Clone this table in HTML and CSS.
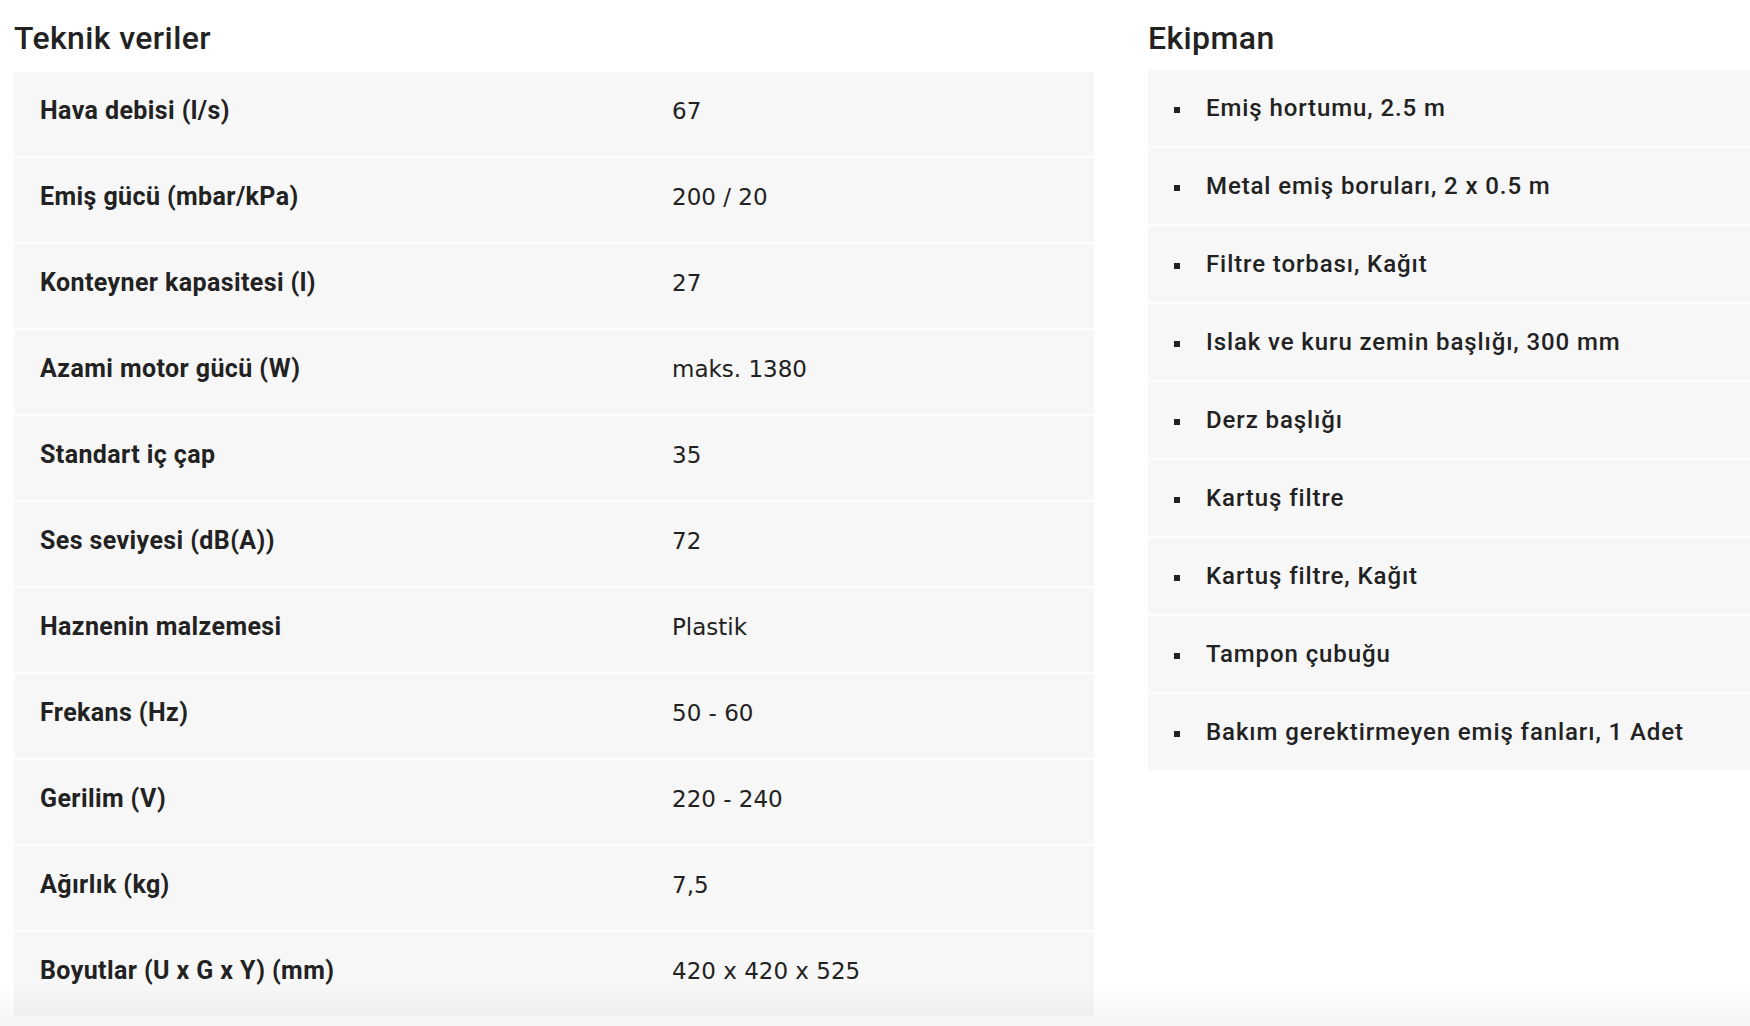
FILE: index.html
```html
<!DOCTYPE html>
<html lang="tr">
<head>
<meta charset="utf-8">
<title>Teknik veriler</title>
<link rel="stylesheet" href="styles.css">
</head>
<body>
<div class="page">
  <section class="col-left">
    <h2 class="heading">Teknik veriler</h2>
    <div class="spec-list">
      <div class="spec-row"><div class="spec-label">Hava debisi (l/s)</div><div class="spec-value">67</div></div>
      <div class="spec-row"><div class="spec-label">Emiş gücü (mbar/kPa)</div><div class="spec-value">200 / 20</div></div>
      <div class="spec-row"><div class="spec-label">Konteyner kapasitesi (l)</div><div class="spec-value">27</div></div>
      <div class="spec-row"><div class="spec-label">Azami motor gücü (W)</div><div class="spec-value">maks. 1380</div></div>
      <div class="spec-row"><div class="spec-label">Standart iç çap</div><div class="spec-value">35</div></div>
      <div class="spec-row"><div class="spec-label">Ses seviyesi (dB(A))</div><div class="spec-value">72</div></div>
      <div class="spec-row"><div class="spec-label">Haznenin malzemesi</div><div class="spec-value">Plastik</div></div>
      <div class="spec-row"><div class="spec-label">Frekans (Hz)</div><div class="spec-value">50 - 60</div></div>
      <div class="spec-row"><div class="spec-label">Gerilim (V)</div><div class="spec-value">220 - 240</div></div>
      <div class="spec-row"><div class="spec-label">Ağırlık (kg)</div><div class="spec-value">7,5</div></div>
      <div class="spec-row"><div class="spec-label">Boyutlar (U x G x Y) (mm)</div><div class="spec-value">420 x 420 x 525</div></div>
    </div>
  </section>
  <section class="col-right">
    <h2 class="heading">Ekipman</h2>
    <ul class="equip-list">
      <li class="equip-item">Emiş hortumu, 2.5 m</li>
      <li class="equip-item">Metal emiş boruları, 2 x 0.5 m</li>
      <li class="equip-item">Filtre torbası, Kağıt</li>
      <li class="equip-item">Islak ve kuru zemin başlığı, 300 mm</li>
      <li class="equip-item">Derz başlığı</li>
      <li class="equip-item">Kartuş filtre</li>
      <li class="equip-item">Kartuş filtre, Kağıt</li>
      <li class="equip-item">Tampon çubuğu</li>
      <li class="equip-item">Bakım gerektirmeyen emiş fanları, 1 Adet</li>
    </ul>
  </section>
</div>
<div class="bottom-fade"></div>
</body>
</html>
```
FILE: styles.css
```css
html, body {
  margin: 0;
  padding: 0;
  background: #ffffff;
  color: #222222;
  font-family: Roboto, "Noto Sans", sans-serif;
}

.page {
  display: flex;
  gap: 54px;
  padding: 20px 0 0 14px;
  overflow: hidden;
}

.col-left {
  width: 1080px;
  flex: 0 0 1080px;
}

.col-right {
  flex: 1 1 auto;
  min-width: 0;
}

.heading {
  margin: 0;
  font-size: 32px;
  line-height: 36px;
  font-weight: 500;
  letter-spacing: 0.4px;
  color: #222222;
}

.col-left .heading {
  margin-bottom: 16px;
}

.col-right .heading {
  margin-bottom: 14px;
}

.spec-list {
  display: flex;
  flex-direction: column;
  gap: 2px;
}

.spec-row {
  display: grid;
  grid-template-columns: 632px 1fr;
  align-items: baseline;
  height: 84px;
  box-sizing: border-box;
  padding-top: 25px;
  background: #f7f7f7;
}

.spec-label {
  padding-left: 26px;
  font-size: 25px;
  line-height: 28px;
  font-weight: 700;
  letter-spacing: 0.4px;
}

.spec-value {
  padding-left: 26px;
  font-family: "DejaVu Sans", Verdana, sans-serif;
  font-size: 23px;
  line-height: 28px;
  font-weight: 400;
}

.equip-list {
  list-style: none;
  margin: 0;
  padding: 0;
  display: flex;
  flex-direction: column;
  gap: 2px;
}

.equip-item {
  display: flex;
  align-items: center;
  height: 76px;
  box-sizing: border-box;
  padding-left: 26px;
  background: #f7f7f7;
  font-size: 24px;
  line-height: 28px;
  font-weight: 500;
  letter-spacing: 0.9px;
  white-space: nowrap;
}

.equip-item::before {
  content: "";
  flex: 0 0 6px;
  width: 6px;
  height: 6px;
  margin-right: 26px;
  margin-top: 3px;
  background: #222222;
}

.bottom-fade {
  position: fixed;
  left: 0;
  right: 0;
  bottom: 0;
  height: 44px;
  pointer-events: none;
  background: linear-gradient(to bottom, rgba(0, 0, 0, 0), rgba(0, 0, 0, 0.04));
}
```
